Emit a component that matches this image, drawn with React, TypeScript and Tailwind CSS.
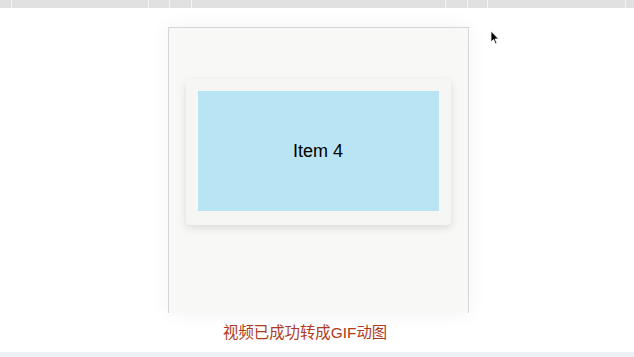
import React from 'react'

const ticks = [11, 148, 169, 191, 445, 467, 487, 625]

export default function App() {
  return (
    <div className="relative w-[634px] h-[357px] overflow-hidden bg-white" style={{ fontFamily: '"Liberation Sans", Arial, sans-serif' }}>
      {/* top strip */}
      <div className="relative h-[8px] bg-[#e1e1e1]">
        {ticks.map((x) => (
          <div key={x} className="absolute top-0 h-[8px] w-[1px] bg-[#f4f4f4]" style={{ left: x }} />
        ))}
      </div>

      <div className="flex justify-center pt-[19px] pl-[2px]">
        <div className="w-[301px] h-[286px] bg-[#f8f8f7] border border-[#d6d6d6] border-b-0 shadow-[0_0_20px_rgba(0,0,0,0.05)] pt-[51px] px-[17px]">
          <div className="h-[146px] rounded-[4px] bg-[#f6f6f5] shadow-[0_3px_8px_rgba(0,0,0,0.12)] pt-[12px] pb-[14px] px-[12px]">
            <div className="h-[120px] bg-[#b9e4f3] flex items-center justify-center">
              <span className="text-[18px] text-black">Item 4</span>
            </div>
          </div>
        </div>
      </div>

      <div className="h-[39px] flex items-center pl-[223px]">
        <span
          className="text-[15.4px] text-[#b03a1c] whitespace-nowrap"
          style={{ fontFamily: '"Liberation Sans", "Noto Sans CJK SC", sans-serif' }}
        >
          视频已成功转成GIF动图
        </span>
      </div>
      <div className="h-[5px] bg-[#edf1f5]" />

      {/* cursor */}
      <svg className="absolute left-[490px] top-[30px]" width="10" height="15" viewBox="0 0 10 15">
        <path d="M1 1 L1 12 L3.5 9.5 L5.5 14 L7 13.3 L5 9 L8.5 9 Z" fill="#000" stroke="#fff" strokeWidth="0.8" />
      </svg>
    </div>
  )
}
